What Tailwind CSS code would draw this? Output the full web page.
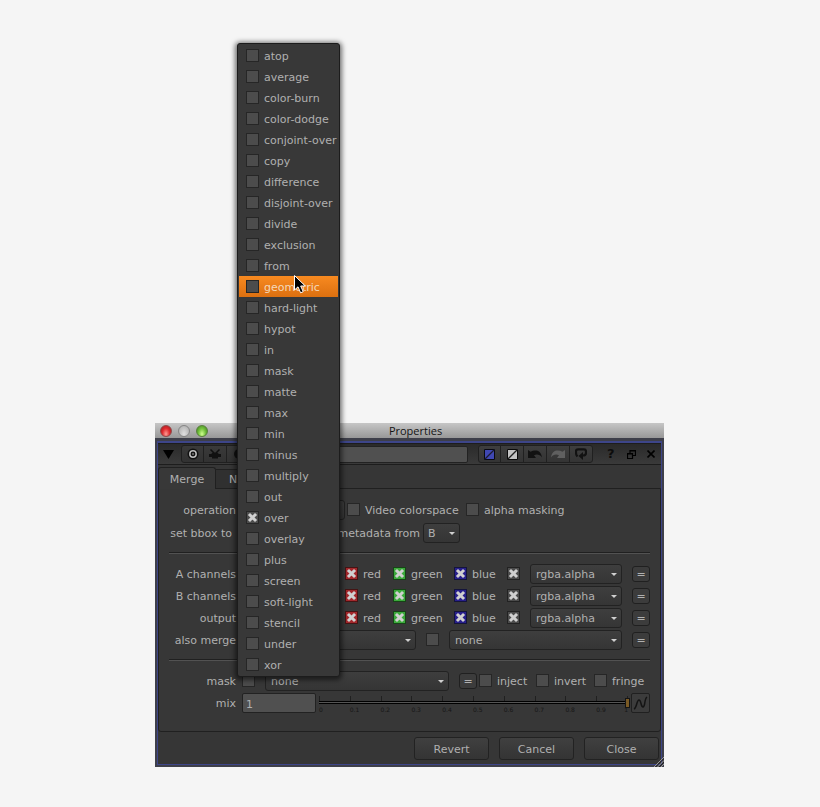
<!DOCTYPE html>
<html lang="en">
<head>
  <meta charset="UTF-8" />
  <meta name="viewport" content="width=device-width, initial-scale=1.0"/>
  <title>Properties</title>
  <script src="https://cdn.jsdelivr.net/npm/@tailwindcss/browser@4"></script>
</head>
<body class="bg-[#f5f5f5] font-['DejaVu_Sans',Verdana,sans-serif] text-[11px] leading-4 text-[#b0b0b0]">

  <!-- shared shapes -->
  <svg class="hidden">
    <symbol id="cross" viewBox="0 0 13 13">
      <path d="M4 4L9 9M9 4L4 9" fill="none" stroke="currentColor" stroke-width="3" stroke-linecap="square"/>
    </symbol>
    <symbol id="arrow" viewBox="0 0 6 3"><path d="M0 0H6L3 3Z" fill="#d0d0d0"/></symbol>
  </svg>

  <main class="pt-[423px] pb-10 pl-[155px] pr-[156px]">
    <section class="relative">

      <!-- title bar -->
      <header class="flex h-[15px] items-center bg-linear-to-b from-[#c6c6c6] to-[#989898] pl-[5px]">
        <div class="flex gap-[6px]">
          <button aria-label="Close window" class="size-3 rounded-full border border-[#8d4a4a] bg-radial-[at_50%_80%] from-[#ff9c94] via-[#e02c30] to-[#9c1418]"></button>
          <button aria-label="Minimize window" class="size-3 rounded-full border border-[#858585] bg-radial-[at_50%_80%] from-[#e0e0e0] to-[#a8a8a8]"></button>
          <button aria-label="Zoom window" class="size-3 rounded-full border border-[#58803c] bg-radial-[at_50%_80%] from-[#d0ff90] via-[#72c03c] to-[#3c7c1c]"></button>
        </div>
        <h1 class="mr-[41px] flex-1 text-center font-['Open_Sans',sans-serif] text-[11px] font-medium text-[#141414]">Properties</h1>
      </header>

      <div class="bg-[#3e3f4a] px-[2px] pt-[3px] pb-[2px]">
        <div class="border border-t-2 border-[#3d4589] bg-[#363636]">

          <!-- node toolbar -->
          <div class="flex h-[22px] items-center border-y border-[#1d1d1d] bg-linear-to-b from-[#2a2a2a] to-[#3a3a3a] pr-[2px] pl-[5px]">
            <button aria-label="Collapse" class="w-[11px]"><svg class="h-[9px] w-[11px]" viewBox="0 0 11 9"><path d="M0 0H11L5.500 9Z" fill="#000"/></svg></button>
            <div class="ml-[7px] flex h-[18px] divide-x divide-[#202020] rounded-[3px] border border-[#202020] bg-linear-to-b from-[#3a3a3a] to-[#323232]">
              <button aria-label="Center node" class="flex w-[22px] items-center justify-center"><svg class="size-3" viewBox="0 0 12 12"><circle cx="6" cy="6" r="5.500" fill="#111"/><circle cx="6" cy="6" r="3.200" fill="none" stroke="#bbb" stroke-width="1.500"/><circle cx="6" cy="6" r="1" fill="#777"/></svg></button>
              <button aria-label="Clip" class="flex w-[23px] items-center justify-center"><svg class="h-[10px] w-3" viewBox="0 0 12 10"><path d="M1.500 0.500L5 4M10.500 0.500L7 4" stroke="#111" stroke-width="1.500"/><path d="M0 5H2L4 3.500H8L10 5H12V8H9V9.500H3V8H0Z" fill="#111"/></svg></button>
              <button aria-label="Color" class="flex w-[23px] items-center justify-center"><svg class="size-3" viewBox="0 0 12 12"><circle cx="6" cy="6" r="5" fill="#111"/></svg></button>
            </div>
            <input type="text" aria-label="Node name" class="ml-2 h-[17px] min-w-0 flex-1 rounded-[2px] border border-[#222] bg-[#505050] px-1"/>
            <div class="ml-[10px] flex h-[18px] divide-x divide-[#202020] rounded-[3px] border border-[#202020] bg-linear-to-b from-[#3e3e3e] to-[#343434]">
              <button aria-label="Node color" class="flex w-[22px] items-center justify-center"><svg class="size-[11px]" viewBox="0 0 11 11"><path d="M.5.500H10.500V10.500H.500Z" fill="#4048b4" stroke="#0a0a14"/><path d="M1 10L10 1" stroke="#1c1c30" stroke-width="1.300"/></svg></button>
              <button aria-label="Control color" class="flex w-[23px] items-center justify-center"><svg class="size-[11px]" viewBox="0 0 11 11"><path d="M.5.500H10.500V10.500H.500Z" fill="#c4c4c4" stroke="#0a0a0a"/><path d="M1 10L10 1" stroke="#222" stroke-width="1.300"/></svg></button>
              <button aria-label="Undo" class="flex w-[23px] items-center justify-center"><svg class="h-2 w-[14px]" viewBox="0 0 14 8"><path d="M0 0L2.500 1.800C7-.500 13 0 14 7.500C12 4.500 9 4 6 5.200L8 8H0Z" fill="#121212"/></svg></button>
              <button aria-label="Redo" class="flex w-[23px] items-center justify-center"><svg class="h-2 w-[14px]" viewBox="0 0 14 8"><path d="M14 0L11.500 1.800C7-.500 1 0 0 7.500C2 4.500 5 4 8 5.200L6 8H14Z" fill="#606060"/></svg></button>
              <button aria-label="Revert all" class="flex w-[22px] items-center justify-center"><svg class="size-3" viewBox="0 0 12 12"><path d="M2.500 8.500Q1 7 1 5V3Q1 1.300 3 1.300H9Q11 1.300 11 3.500V5Q11 7.500 8 7.500H7" fill="none" stroke="#121212" stroke-width="2.200"/><path d="M8 4V12L3.500 8Z" fill="#121212"/></svg></button>
            </div>
            <div class="ml-[10px] flex w-14 items-center justify-between pl-1">
              <button aria-label="Help" class="text-[13px] font-bold text-[#0c0c0c]">?</button>
              <button aria-label="Float panel" class="ml-[2px]"><svg class="size-[9px]" viewBox="0 0 9 9"><path d="M3 3V.500H8.500V5.500H6M.500 3.500H5.500V8.500H.500ZM.500 4H5.500M3 1H8.500" fill="none" stroke="#000" stroke-width="1.200"/></svg></button>
              <button aria-label="Close panel" class="mr-1"><svg class="size-2" viewBox="0 0 8 8"><path d="M.500.500L7.500 7.500M7.500.500L.500 7.500" stroke="#000" stroke-width="1.600"/></svg></button>
            </div>
          </div>

          <!-- tabs -->
          <nav class="-mb-px flex items-end pt-[2px]">
            <button class="h-[22px] w-[58px] rounded-t-[3px] border border-b-0 border-[#202020] bg-[#383838] pt-[2px]">Merge</button>
            <button class="h-5 w-[50px] rounded-tr-[3px] border border-l-0 border-[#202020] bg-[#303030] pt-[2px] pl-[13px] text-left">Node</button>
          </nav>

          <form class="rounded-b-[3px] border border-[#202020] bg-[#373737] px-[10px] pt-[10px] pb-[17px]">
            <div class="flex h-[22px] items-center">
              <label for="operation" class="w-[67px] pt-[2px] text-right">operation</label>
              <select id="operation" class="ml-[6px] h-5 w-[103px] appearance-none rounded-[3px] border border-[#222] bg-linear-to-b from-[#3e3e3e] to-[#353535] px-[5px] pt-[2px]"><option>over</option></select>
              <label class="ml-[2px] flex w-[119px] items-center gap-[5px] pt-[2px] whitespace-nowrap"><input type="checkbox" class="mb-[3px] size-[13px] appearance-none border border-[#262626] bg-[#4c4c4c]"/>Video colorspace</label>
              <label class="flex items-center gap-[5px] pt-[2px] whitespace-nowrap"><input type="checkbox" class="mb-[3px] size-[13px] appearance-none border border-[#262626] bg-[#4c4c4c]"/>alpha masking</label>
            </div>
            <div class="mt-px flex h-[22px] items-center pb-px">
              <label for="bbox" class="w-[67px] pt-[2px] pr-1 text-right whitespace-nowrap">set bbox to</label>
              <select id="bbox" class="ml-[6px] h-5 w-[88px] appearance-none rounded-[3px] border border-[#222] bg-linear-to-b from-[#3e3e3e] to-[#353535] px-[5px] pt-[2px]"><option>union</option></select>
              <label for="metadata" class="w-[90px] pt-[2px] text-right whitespace-nowrap">metadata from</label>
              <div class="relative ml-[3px] h-5 w-[37px]">
                <select id="metadata" class="h-5 w-full appearance-none rounded-[3px] border border-[#222] bg-linear-to-b from-[#3e3e3e] to-[#353535] px-1 pt-[2px]"><option>B</option></select>
                <svg class="pointer-events-none absolute top-[9px] right-[5px] h-[3px] w-[6px]"><use href="#arrow"/></svg>
              </div>
            </div>

            <hr class="mt-2 h-[2px] border-t border-b border-t-[#202020] border-b-[#525252]"/>

            <div id="channels" class="mt-[9px]"></div>

            <div class="flex h-[22px] items-center">
              <label for="also" class="w-[67px] pt-[2px] text-right whitespace-nowrap">also merge</label>
              <div class="relative ml-[6px] h-5 min-w-0 flex-1">
                <select id="also" class="h-5 w-full appearance-none rounded-[3px] border border-[#222] bg-linear-to-b from-[#3e3e3e] to-[#353535] px-[5px] pt-[2px]"><option>none</option></select>
                <svg class="pointer-events-none absolute top-[9px] right-[5px] h-[3px] w-[6px]"><use href="#arrow"/></svg>
              </div>
              <input type="checkbox" aria-label="also merge channel" class="mx-[10px] mb-px size-[13px] appearance-none border border-[#262626] bg-[#4c4c4c]"/>
              <div class="relative h-5 w-[173px]">
                <select aria-label="also merge layer" class="h-5 w-full appearance-none rounded-[3px] border border-[#222] bg-linear-to-b from-[#3e3e3e] to-[#353535] px-[5px] pt-[2px]"><option>none</option></select>
                <svg class="pointer-events-none absolute top-[9px] right-[5px] h-[3px] w-[6px]"><use href="#arrow"/></svg>
              </div>
              <button type="button" class="ml-[10px] h-4 w-[18px] rounded-[3px] border border-[#202020] bg-[#3c3c3c] pt-[2px] leading-3">=</button>
            </div>

            <hr class="mt-2 h-[2px] border-t border-b border-t-[#202020] border-b-[#525252]"/>

            <div class="mt-[9px] flex h-[22px] items-center">
              <label for="mask" class="w-[67px] pt-[2px] text-right">mask</label>
              <input id="mask" type="checkbox" class="mb-px ml-[6px] size-[13px] appearance-none border border-[#262626] bg-[#4c4c4c]"/>
              <div class="relative ml-[10px] h-5 min-w-0 flex-1">
                <select aria-label="mask channel" class="h-5 w-full appearance-none rounded-[3px] border border-[#222] bg-linear-to-b from-[#3e3e3e] to-[#353535] px-[5px] pt-[2px]"><option>none</option></select>
                <svg class="pointer-events-none absolute top-[9px] right-[5px] h-[3px] w-[6px]"><use href="#arrow"/></svg>
              </div>
              <button type="button" class="ml-[10px] h-4 w-[18px] rounded-[3px] border border-[#202020] bg-[#3c3c3c] pt-[2px] leading-3">=</button>
              <label class="ml-[2px] flex w-[57px] items-center gap-[5px] pt-[2px]"><input type="checkbox" class="mb-[3px] size-[13px] appearance-none border border-[#262626] bg-[#4c4c4c]"/>inject</label>
              <label class="flex w-[58px] items-center gap-[5px] pt-[2px]"><input type="checkbox" class="mb-[3px] size-[13px] appearance-none border border-[#262626] bg-[#4c4c4c]"/>invert</label>
              <label class="flex w-[56px] items-center gap-[5px] pt-[2px]"><input type="checkbox" class="mb-[3px] size-[13px] appearance-none border border-[#262626] bg-[#4c4c4c]"/>fringe</label>
            </div>

            <div class="flex h-[22px] items-center">
              <label for="mix" class="w-[67px] pt-[2px] text-right">mix</label>
              <input id="mix" type="text" value="1" class="ml-[6px] h-5 w-[74px] rounded-[2px] border border-[#222] bg-[#505050] px-[3px] pt-[2px]"/>
              <div class="mr-px ml-[3px] flex-1 self-start pt-1 text-[6px] leading-[7px] text-[#161616]">
                <div id="ticks" class="mr-[2px] flex h-[5px] justify-between"></div>
                <input type="range" aria-label="mix amount" min="0" max="1" step="0.01" value="1" class="block h-[3px] w-full appearance-none border-y border-black bg-[#555] [&::-webkit-slider-thumb]:h-[10px] [&::-webkit-slider-thumb]:w-[5px] [&::-webkit-slider-thumb]:appearance-none [&::-webkit-slider-thumb]:border [&::-webkit-slider-thumb]:border-[#151515] [&::-webkit-slider-thumb]:bg-[#7a5a24]"/>
                <div id="scale" class="mt-[2px] mr-[2px] flex justify-between"></div>
              </div>
              <button type="button" aria-label="Animation" class="flex h-5 w-[19px] items-center justify-center rounded-[2px] border border-[#202020] bg-[#3c3c3c]"><svg class="h-[14px] w-[15px]" viewBox="0 0 15 14"><path d="M1 13C4 12 3.500 4 6 4C8.500 4 7.500 11 10 11C12.500 11 11 3 14 1" fill="none" stroke="#141414" stroke-width="1.500"/></svg></button>
            </div>
          </form>

          <footer class="flex justify-end gap-[10px] pt-[5px] pr-[2px] pb-1">
            <button class="h-[23px] w-[75px] rounded-[3px] border border-[#222] bg-linear-to-b from-[#404040] to-[#343434] pt-[2px]">Revert</button>
            <button class="h-[23px] w-[75px] rounded-[3px] border border-[#222] bg-linear-to-b from-[#404040] to-[#343434] pt-[2px]">Cancel</button>
            <button class="h-[23px] w-[75px] rounded-[3px] border border-[#222] bg-linear-to-b from-[#404040] to-[#343434] pt-[2px]">Close</button>
          </footer>
        </div>
      </div>

      <!-- resize grip -->
      <svg class="absolute right-0 bottom-0 size-[10px]" viewBox="0 0 10 10"><path d="M0 10L10 0M3.500 10L10 3.500M7 10L10 7" stroke="#999"/><path d="M1.500 10L10 1.500M5 10L10 5" stroke="#222"/></svg>

      <!-- operation menu -->
      <ul id="menu" class="absolute bottom-[90px] left-[82px] w-[103px] rounded-[3px] border border-[#1c1c1c] bg-[#383838] p-px shadow-[0_1px_5px_2px_rgba(0,0,0,0.55)]"></ul>
    </section>
  </main>

  <script>
    const operations = [
      "atop", "average", "color-burn", "color-dodge", "conjoint-over", "copy",
      "difference", "disjoint-over", "divide", "exclusion", "from", "geometric",
      "hard-light", "hypot", "in", "mask", "matte", "max", "min", "minus",
      "multiply", "out", "over", "overlay", "plus", "screen", "soft-light",
      "stencil", "under", "xor"
    ];

    // checkbox with a cross drawn on top when it is ticked
    function tick(colors, checked, label) {
      return `<span class="relative mb-[3px] block size-[13px] shrink-0">
        <input type="checkbox" ${checked ? "checked" : ""} aria-label="${label}" class="peer block size-[13px] appearance-none border ${colors}"/>
        <svg class="pointer-events-none absolute inset-0 hidden size-[13px] text-[#d0d0d0] peer-checked:block"><use href="#cross"/></svg>
      </span>`;
    }

    const cursor = `<svg class="absolute -top-px left-[55px] h-[19px] w-[12px]" viewBox="0 0 12 19">
      <path d="M.5.500V15L4 11.800L6.600 17.800L9.200 16.700L6.700 11H11.300Z" fill="#000" stroke="#fff"/></svg>`;

    document.getElementById("menu").innerHTML = operations.map(name => {
      const active = name === "geometric";
      return `<li class="relative ${active ? "bg-linear-to-b from-[#f88a20] to-[#dc7010] text-[#f4d8b8]" : ""}">
        <label class="flex h-[21px] items-center gap-[5px] pt-[2px] pl-[7px] whitespace-nowrap">
          ${tick("border-[#262626] bg-[#4c4c4c]", name === "over", name)}${name}
        </label>${active ? cursor : ""}</li>`;
    }).join("");

    document.getElementById("channels").innerHTML = ["A channels", "B channels", "output"].map((name, i) => `
      <div class="flex h-[22px] items-center">
        <label for="layer${i}" class="w-[67px] pt-[2px] text-right whitespace-nowrap">${name}</label>
        <select id="layer${i}" class="mr-[10px] ml-[6px] h-5 min-w-0 flex-1 appearance-none rounded-[3px] border border-[#222] bg-linear-to-b from-[#3e3e3e] to-[#353535] px-[5px] pt-[2px]"><option>rgba</option></select>
        <label class="flex w-12 items-center gap-[5px] pt-[2px]">${tick("border-[#451414] bg-[#a3282c]", true, "red")}red</label>
        <label class="flex w-[61px] items-center gap-[5px] pt-[2px]">${tick("border-[#164516] bg-[#3caa3c]", true, "green")}green</label>
        <label class="flex w-[53px] items-center gap-[5px] pt-[2px]">${tick("border-[#14143c] bg-[#28208c]", true, "blue")}blue</label>
        <div class="w-[23px] pt-[2px]">${tick("border-[#222] bg-[#4c4c4c]", true, "alpha")}</div>
        <div class="relative h-5 w-[92px]">
          <select aria-label="${name} alpha" class="h-5 w-full appearance-none rounded-[3px] border border-[#222] bg-linear-to-b from-[#3e3e3e] to-[#353535] px-[5px] pt-[2px]"><option>rgba.alpha</option></select>
          <svg class="pointer-events-none absolute top-[9px] right-[5px] h-[3px] w-[6px]"><use href="#arrow"/></svg>
        </div>
        <button type="button" class="ml-[10px] h-4 w-[18px] rounded-[3px] border border-[#202020] bg-[#3c3c3c] pt-[2px] leading-3">=</button>
      </div>`).join("");

    const steps = ["0", "0.1", "0.2", "0.3", "0.4", "0.5", "0.6", "0.7", "0.8", "0.9", "1"];
    document.getElementById("ticks").innerHTML = steps.map(() => `<span class="w-px bg-[#202020]"></span>`).join("");
    document.getElementById("scale").innerHTML = steps.map(s => `<span class="flex w-px ${s === "1" ? "justify-end" : ""}">${s}</span>`).join("");
  </script>
</body>
</html>
